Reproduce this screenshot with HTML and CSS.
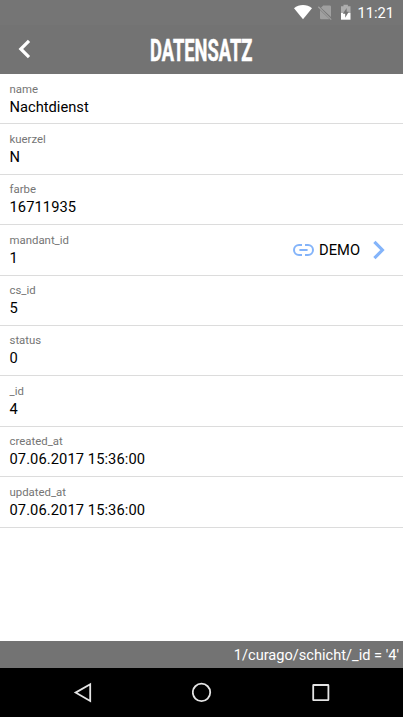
FILE: index.html
```html
<!DOCTYPE html>
<html lang="de">
<head>
<meta charset="utf-8">
<title>Datensatz</title>
<link rel="stylesheet" href="styles.css">
</head>
<body>
<div class="status-bar">
  <svg class="status-icons" width="72" height="25" viewBox="0 0 72 25">
    <path fill="#fff" d="M1 8.3C6 4 14 4 19 8.3L10 19.2Z"/>
    <path fill="#a0a0a0" d="M30.2 5.5H36.7q1.3 0 1.3 1.3V17L28 7.8ZM27 10L36.5 19.3H28.3q-1.3 0-1.3-1.3Z"/>
    <path stroke="#a0a0a0" stroke-width="1.3" d="M25.3 6.8L38.2 19.6"/>
    <path fill="#adadad" d="M48 6.3h2.5V4.8h4.4v1.5H57.5V13H48Z"/>
    <path fill="#fff" d="M48 13h9.5v6.7H48Z"/>
    <path fill="#747474" d="M53.7 8L49.8 13.8h2.4v4l3.6-6h-2.1Z"/>
  </svg>
  <span class="clock">11:21</span>
</div>
<header class="header">
  <svg class="back" width="14" height="20" viewBox="0 0 14 20"><path fill="none" stroke="#fff" stroke-width="3.2" d="M11 1.8L2.8 10L11 18.2"/></svg>
  <svg class="title" width="112" height="40" viewBox="0 0 112 40"><text x="5" y="31" textLength="102.5" lengthAdjust="spacingAndGlyphs">DATENSATZ</text></svg>
</header>
<main class="list">
  <div class="row"><div class="label">name</div><div class="value">Nachtdienst</div></div>
  <div class="row"><div class="label">kuerzel</div><div class="value">N</div></div>
  <div class="row"><div class="label">farbe</div><div class="value number">16711935</div></div>
  <div class="row linked">
    <div><div class="label">mandant_id</div><div class="value">1</div></div>
    <div class="link">
      <svg width="21" height="14" viewBox="0 0 21 14" fill="none" stroke="#84b4fa" stroke-width="2"><path d="M9 2H6a5 5 0 0 0 0 10H9M12 2h3a5 5 0 0 1 0 10H12M6.4 7h8.2"/></svg>
      <span class="link-name">DEMO</span>
      <svg class="next" width="14" height="20" viewBox="0 0 14 20"><path fill="none" stroke="#84b4fa" stroke-width="3.2" d="M2.4 1.8L10.4 10L2.4 18.2"/></svg>
    </div>
  </div>
  <div class="row"><div class="label">cs_id</div><div class="value">5</div></div>
  <div class="row"><div class="label">status</div><div class="value">0</div></div>
  <div class="row"><div class="label">_id</div><div class="value">4</div></div>
  <div class="row"><div class="label">created_at</div><div class="value number">07.06.2017 15:36:00</div></div>
  <div class="row"><div class="label">updated_at</div><div class="value number">07.06.2017 15:36:00</div></div>
</main>
<footer class="path">1/curago/schicht/_id = '4'</footer>
<nav class="nav">
  <svg width="20" height="22" viewBox="0 0 20 22"><path d="M17.2 2.2V19L2.6 10.6Z"/></svg>
  <svg width="20" height="22" viewBox="0 0 20 22"><circle cx="9.5" cy="10.4" r="8.7"/></svg>
  <svg width="20" height="22" viewBox="0 0 20 22"><rect x="2.2" y="3" width="15.2" height="15.2" rx=".4"/></svg>
</nav>
</body>
</html>
```
FILE: styles.css
```css
* { box-sizing: border-box; }

body {
  margin: 0;
  height: 717px;
  display: flex;
  flex-direction: column;
  overflow: hidden;
  background: #fff;
  color: #000;
  font-family: Roboto, sans-serif;
}

.status-bar {
  height: 25px;
  display: flex;
  justify-content: flex-end;
  padding-right: 9px;
  background: #757575;
  color: #fff;
}

.status-icons { margin-right: -8px; }

.clock {
  font-size: 14.7px;
  line-height: 26px;
}

.header {
  height: 49px;
  display: grid;
  grid-template-columns: 145px 112px 1fr;
  align-items: center;
  background: #737373;
}

.back { margin: 0 0 1px 18px; }

.title { overflow: visible; }

.title text {
  fill: #fff;
  stroke: #fff;
  stroke-width: .5px;
  font: bold 30.5px Roboto, sans-serif;
}

.list { flex: 1; }

.row {
  height: 50.4px;
  padding: 6.5px 10px 0 9.5px;
  border-bottom: 1px solid #dcdcdc;
}

.label {
  font-size: 11.4px;
  line-height: 16px;
  color: #757575;
}

.value {
  font-size: 14.7px;
  line-height: 20px;
}

.number { letter-spacing: .08px; }

.linked {
  display: flex;
  justify-content: space-between;
}

.link {
  height: 37px;
  display: flex;
  align-items: center;
  padding-right: 7px;
}

.link-name {
  margin: 0 12px 0 5px;
  font-size: 14.7px;
}

.path {
  height: 27px;
  padding-right: 4px;
  background: #737373;
  color: #fff;
  font-size: 14.6px;
  line-height: 28px;
  text-align: right;
}

.nav {
  height: 49px;
  display: flex;
  align-items: center;
  justify-content: space-between;
  padding: 0 72px 0 73px;
  background: #000;
}

.nav svg {
  fill: none;
  stroke: #e4e4e4;
  stroke-width: 1.8;
}
```
